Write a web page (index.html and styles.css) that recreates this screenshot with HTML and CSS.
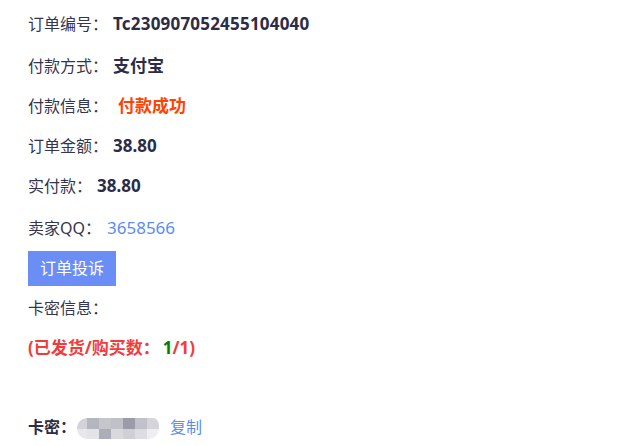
FILE: index.html
```html
<!DOCTYPE html>
<html lang="zh-CN">
<head>
<meta charset="utf-8">
<title>订单详情</title>
<link rel="stylesheet" href="styles.css">
</head>
<body>
<div class="order">
  <div class="row r1"><span class="label">订单编号：</span> <span class="val">Tc230907052455104040</span></div>
  <div class="row"><span class="label">付款方式：</span> <span class="val">支付宝</span></div>
  <div class="row"><span class="label">付款信息：</span> <span class="val status">付款成功</span></div>
  <div class="row"><span class="label">订单金额：</span> <span class="val">38.80</span></div>
  <div class="row r5"><span class="label">实付款：</span> <span class="val">38.80</span></div>
  <div class="row"><span class="label">卖家QQ：</span> <a class="qq">3658566</a></div>
  <div class="btn-row"><button class="btn">订单投诉</button></div>
  <div class="row after-btn"><span class="label">卡密信息：</span></div>
  <div class="row"><span class="shipped">(已发货/购买数：<span class="ok">1</span>/1)</span></div>
  <div class="row card">
    <span class="card-label">卡密：</span>
    <span class="mosaic">
      <i class="c11"></i><i class="c12"></i><i class="c13"></i><i class="c14"></i><i class="c15"></i><i class="c16"></i><i class="c17"></i>
      <i class="c21"></i><i class="c22"></i><i class="c23"></i><i class="c24"></i><i class="c25"></i><i class="c26"></i><i class="c27"></i>
    </span>
    <a class="copy">复制</a>
  </div>
</div>
</body>
</html>
```

FILE: styles.css
```css
html, body {
  margin: 0;
  padding: 0;
  background: #ffffff;
}
body {
  font-family: "Noto Sans", "Noto Sans CJK SC", sans-serif;
  font-size: 16px;
  color: #35354f;
}
.order {
  padding: 12px 0 0 28px;
  display: flex;
  flex-direction: column;
  align-items: flex-start;
}
.row {
  height: 24px;
  line-height: 24px;
  margin-bottom: 16px;
  white-space: nowrap;
  display: flex;
  align-items: center;
}
.r1 { margin-bottom: 18px; }
.r5 { margin-bottom: 18px; }
.label {
  color: #35354f;
  font-size: 16px;
}
.val {
  font-size: 17px;
  font-weight: 700;
  color: #2c2c46;
  margin-left: 5px;
}
.r1 .val { letter-spacing: 0.2px; }
.status {
  color: #ff4400;
  margin-left: 10px;
}
.qq {
  font-size: 17px;
  color: #5b8cf2;
  margin-left: 6px;
}
.btn-row {
  margin-top: -5px;
  margin-bottom: 10px;
}
.btn {
  display: block;
  width: 88px;
  height: 35px;
  padding: 0;
  border: none;
  border-radius: 0;
  background: #6a8ef5;
  color: #ffffff;
  font-family: "Noto Sans", "Noto Sans CJK SC", sans-serif;
  font-size: 16px;
  line-height: 35px;
  text-align: center;
}
.shipped {
  font-size: 17px;
  font-weight: 700;
  color: #f23c3c;
}
.ok {
  color: #008000;
  margin-left: 3px;
}
.card {
  margin-top: 39px;
}
.card-label {
  font-weight: 700;
  color: #2c2c46;
  width: 49px;
}
.mosaic {
  display: grid;
  grid-template-columns: 10px repeat(6, 12px);
  grid-template-rows: 11px 10px;
  width: 82px;
  height: 21px;
  border-radius: 10px 6px 10px 10px / 10px 8px 10px 10px;
  overflow: hidden;
  margin-top: 2px;
  filter: blur(0.3px);
}
.mosaic i { display: block; }
.c11 { background: #d2d2d8; }
.c12 { background: #b5b5bf; }
.c13 { background: #c5c5cc; }
.c14 { background: #c0c0c8; }
.c15 { background: #9b9baa; }
.c16 { background: #c1c1c9; }
.c17 { background: #d4d4da; }
.c21 { background: #e8e8ec; }
.c22 { background: #e3e3e8; }
.c23 { background: #adadba; }
.c24 { background: #d8d8dd; }
.c25 { background: #cfcfd5; }
.c26 { background: #dcdce1; }
.c27 { background: #efeff2; }
.copy {
  color: #5b8cf2;
  font-size: 16px;
  margin-left: 11px;
}
```
